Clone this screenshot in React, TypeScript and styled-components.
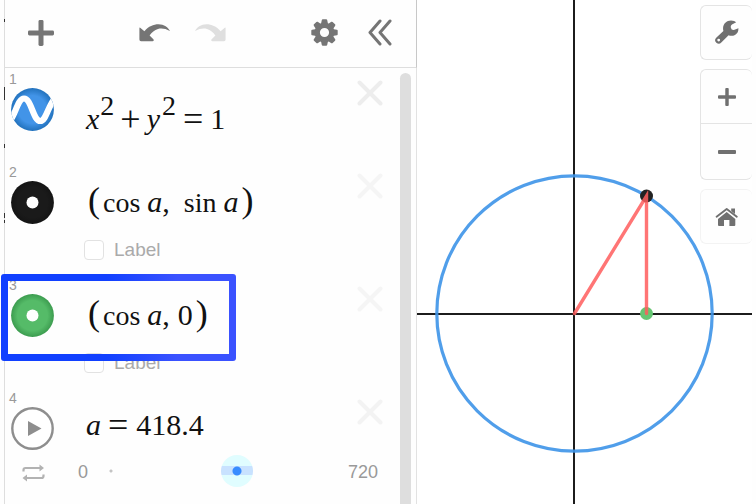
import React, { useState } from "react";
import styled, { createGlobalStyle, css } from "styled-components";

const GlobalStyle = createGlobalStyle`
  * { box-sizing: border-box; }
  body {
    margin: 0;
    background: #fff;
    font-family: "Liberation Sans", Arial, sans-serif;
  }
`;

const Page = styled.div`
  display: flex;
  min-height: 100vh;
  padding-right: 4px;
  background: #fefefe;
`;

const Gutter = styled.svg`
  flex: none;
  width: 5px;
  height: 504px;
`;

const Panel = styled.aside`
  flex: none;
  display: flex;
  flex-direction: column;
  width: 412px;
`;

const Header = styled.header`
  display: flex;
  justify-content: space-between;
  align-items: center;
  height: 68px;
  padding: 0 14px 2px;
  border-right: 1px solid #c8c8c8;
  border-bottom: 1px solid #dedede;
`;

const Group = styled.div<{ $gap: number }>`
  display: flex;
  gap: ${(p) => p.$gap}px;
`;

const IconButton = styled.button`
  display: flex;
  align-items: center;
  justify-content: center;
  width: 44px;
  height: 44px;
  padding: 0;
  border: 0;
  background: none;
  color: #757575;
  &:disabled { color: #dfdfdf; }
`;

const Body = styled.div`
  flex: 1;
  display: flex;
  border-right: 1px solid #e2e2e2;
`;

const List = styled.div`
  flex: 1;
`;

const Scrollbar = styled.div`
  width: 11px;
  margin: 5px 5px 0 0;
  border-radius: 6px 6px 0 0;
  background: #dedede;
`;

const Row = styled.section<{ $height: number }>`
  position: relative;
  display: grid;
  grid-template-columns: 81px 1fr 60px;
  align-content: start;
  min-height: ${(p) => p.$height}px;
`;

const Side = styled.div`
  padding-left: 4px;
`;

const Index = styled.div`
  height: 20px;
  font-size: 14px;
  line-height: 22px;
  color: #999;
`;

const StyleButton = styled.button`
  display: block;
  width: 43px;
  height: 43px;
  margin-left: 2px;
  padding: 0;
  border: 0;
  border-radius: 50%;
  background: none;
  svg { display: block; }
`;

const Formula = styled.div<{ $top: number }>`
  padding-top: ${(p) => p.$top}px;
  font-family: "Liberation Serif", "Times New Roman", serif;
  font-size: 30px;
  line-height: 40px;
  white-space: nowrap;
  color: #111;
`;

const glyph = css<{ $before?: number }>`
  margin-left: ${(p) => p.$before ?? 0}px;
  line-height: 0;
`;

const Num = styled.span<{ $before?: number }>`
  ${glyph}
`;

const Var = styled.i<{ $before?: number }>`
  ${glyph}
`;

const Fn = styled.span<{ $before?: number }>`
  ${glyph}
  font-size: 28px;
`;

const Paren = styled.span<{ $before?: number }>`
  ${glyph}
  font-size: 36px;
`;

const Op = styled.span<{ $before?: number }>`
  ${glyph}
  font-size: 36px;
  vertical-align: -2px;
`;

const Sup = styled.sup<{ $before?: number }>`
  ${glyph}
  font-size: 28px;
  vertical-align: 14px;
`;

const CloseButton = styled.button<{ $color: string }>`
  justify-self: center;
  align-self: start;
  width: 26px;
  height: 26px;
  margin-top: 12px;
  padding: 0;
  border: 0;
  background: none;
  color: ${(p) => p.$color};
  svg { display: block; }
`;

const LabelToggle = styled.label`
  display: flex;
  align-items: center;
  gap: 10px;
  height: 24px;
  margin: 16px 0 0 -2px;
  font-size: 19px;
  color: #aaa;
`;

const Checkbox = styled.input`
  appearance: none;
  width: 20px;
  height: 20px;
  margin: 0;
  border: 1px solid #e2e2e2;
  border-radius: 4px;
  background: #fff;
`;

const Highlight = styled.div`
  position: absolute;
  top: 0;
  left: -4px;
  width: 235px;
  height: 87px;
  border: 7px solid #2a4bff;
  border-image: linear-gradient(90deg, #1140ff 45%, #3a52ff 75%) 7;
  clip-path: inset(0 round 3px);
  pointer-events: none;
`;

const SliderLine = styled.div`
  grid-column: 1 / -1;
  display: flex;
  align-items: center;
  height: 32px;
  margin-top: 5px;
  padding: 0 22px 0 17px;
  font-size: 18px;
  color: #999;
`;

const LoopButton = styled.button`
  width: 23px;
  height: 18px;
  margin-top: 4px;
  padding: 0;
  border: 0;
  background: none;
  svg { display: block; }
`;

const Bound = styled.span<{ $left: number; $right: number }>`
  padding: 2px ${(p) => p.$right}px 0 ${(p) => p.$left}px;
`;

const thumb = css`
  appearance: none;
  width: 32px;
  height: 32px;
  border: 0;
  border-radius: 50%;
  background:
    radial-gradient(circle, #388cff 4px, transparent 5px),
    linear-gradient(transparent 11px, #c8e2ff 11px, #c8e2ff 20px, transparent 20px),
    #e0fdff;
`;

const Range = styled.input`
  appearance: none;
  flex: 1;
  min-width: 0;
  height: 32px;
  margin: 0;
  background: radial-gradient(circle at 16px 16px, #c4c4c4 1px, transparent 2px);
  &::-webkit-slider-thumb { ${thumb} }
  &::-moz-range-thumb { ${thumb} }
`;

const Plot = styled.main`
  position: relative;
  flex: 1;
  min-width: 0;
  background: #fff;
`;

const Graph = styled.svg`
  display: block;
  width: 100%;
  height: 100%;
`;

const Tools = styled.nav`
  position: absolute;
  top: 5px;
  right: 0;
  display: flex;
  flex-direction: column;
  gap: 9px;
`;

const ToolBox = styled.div<{ $faint?: boolean }>`
  width: 52px;
  border: 1px solid ${(p) => (p.$faint ? "#f3f3f3" : "#e4e4e4")};
  border-right: 0;
  border-radius: 6px;
  background: #fefefe;
`;

const ToolButton = styled.button`
  display: flex;
  align-items: center;
  justify-content: center;
  width: 100%;
  height: 53px;
  padding: 0;
  border: 0;
  background: none;
  color: #707070;
  & + & {
    height: 56px;
    border-top: 1px solid #e4e4e4;
  }
`;

const PlusIcon = ({ size, weight }: { size: number; weight: number }) => (
  <svg width={size} height={size} viewBox="0 0 26 26" fill="currentColor">
    <rect x="0" y={13 - weight / 2} width="26" height={weight} rx="1.4" />
    <rect x={13 - weight / 2} y="0" width={weight} height="26" rx="1.4" />
  </svg>
);

const ArrowIcon = ({ flip }: { flip?: boolean }) => (
  <svg width="32" height="18" viewBox="0 0 32 18">
    <path
      transform={flip ? "translate(32 0) scale(-1 1)" : undefined}
      fill="currentColor"
      d="M1.2 3.8 L5.4 7.2 C9.5 2.2 14.5 .2 19.5 .2 C25 .3 29.3 3.4 31 7 C26.5 4.6 22.5 4 19 5 C15.5 6 12.8 8.3 10.6 11.4 L14.6 15.4 Q15.4 17.2 13.6 17.2 H2 Q.4 17.2 .4 15.6 V4.4 Q.4 3.2 1.2 3.8 Z"
    />
  </svg>
);

const GearIcon = () => (
  <svg width="27" height="27" viewBox="-13.5 -13.5 27 27" fill="currentColor">
    {[0, 45, 90, 135, 180, 225, 270, 315].map((angle) => (
      <path
        key={angle}
        transform={`rotate(${angle})`}
        d="M-3.6 -8 L-2.7 -12.4 Q-2.5 -13.2 -1.7 -13.2 H1.7 Q2.5 -13.2 2.7 -12.4 L3.6 -8 Z"
      />
    ))}
    <circle r="7.2" fill="none" stroke="currentColor" strokeWidth="5.2" />
  </svg>
);

const CollapseIcon = () => (
  <svg width="24" height="27" viewBox="0 0 24 27" fill="none" stroke="currentColor" strokeWidth="3" strokeLinecap="round" strokeLinejoin="round">
    <path d="M12 2 L2 13.5 L12 25 M22 2 L12 13.5 L22 25" />
  </svg>
);

const WrenchIcon = () => (
  <svg width="24" height="25" viewBox="9 7.5 24 25" fill="currentColor">
    <path
      fillRule="evenodd"
      d="M10.2 25.2 L17.4 18.4 C15.8 12.5 20 8 25 8 Q28.6 8 30.2 9.8 L26 12 Q24.4 13 24.8 15 Q25.3 17.8 27.8 17.6 L32.4 15.8 Q32.6 20.5 29 22.4 Q25.8 24 22.6 22.8 L15.3 30 A3.5 3.5 0 0 1 10.2 25.2 Z M12.7 26.2 A1.4 1.4 0 1 0 12.7 29 A1.4 1.4 0 1 0 12.7 26.2 Z"
    />
  </svg>
);

const HomeIcon = () => (
  <svg width="24" height="20" viewBox="9 9.5 24 20" fill="currentColor">
    <path d="M20.7 14.6 L29.3 21.4 V27.4 Q29.3 28.4 28.3 28.4 H23.4 V22.4 H18 V28.4 H13 Q12 28.4 12 27.4 V21.4 Z" />
    <path d="M25.2 11 H29 V16.6 L25.2 13.6 Z" />
    <path d="M10.6 19.2 L20.7 11.4 L30.8 19.2" fill="none" stroke="currentColor" strokeWidth="1.9" strokeLinecap="round" strokeLinejoin="round" />
  </svg>
);

const CurveIcon = () => (
  <svg width="43" height="43" viewBox="0 0 43 43">
    <defs>
      <radialGradient id="curveFill">
        <stop offset="0.65" stopColor="#4294e8" />
        <stop offset="1" stopColor="#2272bd" />
      </radialGradient>
      <clipPath id="curveClip"><circle cx="21.5" cy="21.5" r="21.4" /></clipPath>
    </defs>
    <circle cx="21.5" cy="21.5" r="21.4" fill="url(#curveFill)" />
    <path
      clipPath="url(#curveClip)"
      d="M-1 33 C5 25 7 10.5 13 10.5 C20.5 10.5 22 33 29.3 33 C35 33 37 18 44 10"
      fill="none"
      stroke="#fff"
      strokeWidth="6.2"
    />
  </svg>
);

const PointIcon = ({ id, color, edge }: { id: string; color: string; edge: string }) => (
  <svg width="43" height="43" viewBox="0 0 43 43">
    <defs>
      <radialGradient id={id}>
        <stop offset="0.7" stopColor={color} />
        <stop offset="1" stopColor={edge} />
      </radialGradient>
    </defs>
    <circle cx="21.5" cy="21.5" r="21.4" fill={`url(#${id})`} />
    <circle cx="21.5" cy="21.5" r="6" fill="#fff" />
  </svg>
);

const PlayIcon = () => (
  <svg width="43" height="43" viewBox="0 0 43 43">
    <circle cx="21.5" cy="21.5" r="20.2" fill="#fff" stroke="#8e8e8e" strokeWidth="2.4" />
    <path d="M17 14 L30.5 21.5 L17 29 Z" fill="#8e8e8e" />
  </svg>
);

const LoopIcon = () => (
  <svg width="23" height="18" viewBox="0 0 23 18">
    <path d="M1.5 7.5 V6 Q1.5 4 3.5 4 H18 M21.5 10.5 V12 Q21.5 14 19.5 14 H5" fill="none" stroke="#b2b2b2" strokeWidth="2.2" />
    <path d="M17.5 .5 L22 4 L17.5 7.5 Z M5 10.5 L.5 14 L5 17.5 Z" fill="#b2b2b2" />
  </svg>
);

const Close = ({ name, color }: { name: string; color: string }) => (
  <CloseButton $color={color} aria-label={`Delete expression ${name}`}>
    <svg width="26" height="26" viewBox="0 0 26 26" stroke="currentColor" strokeWidth="4" strokeLinecap="round">
      <path d="M2.5 2.5 L23.5 23.5 M23.5 2.5 L2.5 23.5" />
    </svg>
  </CloseButton>
);

export default function App() {
  const [value, setValue] = useState(418.4);

  return (
    <>
      <GlobalStyle />
      <Page>
        <Gutter viewBox="0 0 5 504" aria-hidden="true">
          <rect x="4" width="1" height="504" fill="#dedede" />
          <path d="M4 19h1v3h-1z M4 87h1v13h-1z M4 144h1v4h-1z M4 213h1v5h-1z M4 220h1v3h-1z" fill="#333" />
        </Gutter>
        <Panel>
          <Header>
            <IconButton aria-label="Add item"><PlusIcon size={26} weight={5} /></IconButton>
            <Group $gap={11}>
              <IconButton aria-label="Undo"><ArrowIcon /></IconButton>
              <IconButton aria-label="Redo" disabled><ArrowIcon flip /></IconButton>
            </Group>
            <Group $gap={12}>
              <IconButton aria-label="Edit list"><GearIcon /></IconButton>
              <IconButton aria-label="Hide list"><CollapseIcon /></IconButton>
            </Group>
          </Header>
          <Body>
            <List>
              <Row $height={93}>
                <Side>
                  <Index>1</Index>
                  <StyleButton aria-label="Curve style"><CurveIcon /></StyleButton>
                </Side>
                <Formula $top={31}>
                  <Var>x</Var><Sup $before={1}>2</Sup><Op $before={6}>+</Op><Var $before={6}>y</Var>
                  <Sup $before={2}>2</Sup><Op $before={7}>=</Op><Num $before={7}>1</Num>
                </Formula>
                <Close name="1" color="#ededed" />
              </Row>
              <Row $height={113}>
                <Side>
                  <Index>2</Index>
                  <StyleButton aria-label="Black point style"><PointIcon id="blackPoint" color="#1a1a1a" edge="#141414" /></StyleButton>
                </Side>
                <div>
                  <Formula $top={21}>
                    <Paren $before={2}>(</Paren><Fn $before={3}>cos</Fn><Var $before={7}>a</Var><Num>,</Num>
                    <Fn $before={14}>sin</Fn><Var $before={7}>a</Var><Paren $before={3}>)</Paren>
                  </Formula>
                  <LabelToggle><Checkbox type="checkbox" />Label</LabelToggle>
                </div>
                <Close name="2" color="#f5f5f5" />
              </Row>
              <Row $height={113}>
                <Side>
                  <Index>3</Index>
                  <StyleButton aria-label="Green point style"><PointIcon id="greenPoint" color="#55bb68" edge="#3c9c4f" /></StyleButton>
                </Side>
                <div>
                  <Formula $top={21}>
                    <Paren $before={2}>(</Paren><Fn $before={3}>cos</Fn><Var $before={7}>a</Var><Num>,</Num>
                    <Num $before={8}>0</Num><Paren $before={3}>)</Paren>
                  </Formula>
                  <LabelToggle><Checkbox type="checkbox" />Label</LabelToggle>
                </div>
                <Close name="3" color="#f5f5f5" />
                <Highlight />
              </Row>
              <Row $height={117}>
                <Side>
                  <Index>4</Index>
                  <StyleButton aria-label="Play"><PlayIcon /></StyleButton>
                </Side>
                <Formula $top={18}>
                  <Var>a</Var><Op $before={7}>=</Op><Num $before={8}>{value}</Num>
                </Formula>
                <Close name="4" color="#f3f3f3" />
                <SliderLine>
                  <LoopButton aria-label="Loop mode"><LoopIcon /></LoopButton>
                  <Bound $left={33} $right={7}>0</Bound>
                  <Range
                    type="range"
                    aria-label="a"
                    min={0}
                    max={720}
                    step={0.1}
                    value={value}
                    onChange={(e) => setValue(Number(e.target.value))}
                  />
                  <Bound $left={4} $right={0}>720</Bound>
                </SliderLine>
              </Row>
            </List>
            <Scrollbar />
          </Body>
        </Panel>
        <Plot>
          <Graph viewBox="0 0 335 504" preserveAspectRatio="xMidYMin meet" role="img" aria-label="Unit circle">
            <path d="M0 314 H335 M157 0 V504" stroke="#1c1c1c" strokeWidth="2" />
            <circle cx="157.5" cy="313.5" r="137.7" fill="none" stroke="#3d93e8" strokeOpacity="0.9" strokeWidth="3.2" />
            <circle cx="229.5" cy="196" r="6.5" fill="#222" />
            <circle cx="229.5" cy="313.5" r="6.5" fill="#66c673" />
            <path d="M157.5 313.5 L229.5 196 V313.5" fill="none" stroke="#ff5d5d" strokeOpacity="0.85" strokeWidth="3.4" strokeLinecap="round" />
          </Graph>
          <Tools>
            <ToolBox>
              <ToolButton aria-label="Graph settings"><WrenchIcon /></ToolButton>
            </ToolBox>
            <ToolBox>
              <ToolButton aria-label="Zoom in"><PlusIcon size={18} weight={5} /></ToolButton>
              <ToolButton aria-label="Zoom out">
                <svg width="18" height="4" viewBox="0 0 18 4"><rect width="18" height="4" rx="1" fill="currentColor" /></svg>
              </ToolButton>
            </ToolBox>
            <ToolBox $faint>
              <ToolButton aria-label="Default viewport"><HomeIcon /></ToolButton>
            </ToolBox>
          </Tools>
        </Plot>
      </Page>
    </>
  );
}
